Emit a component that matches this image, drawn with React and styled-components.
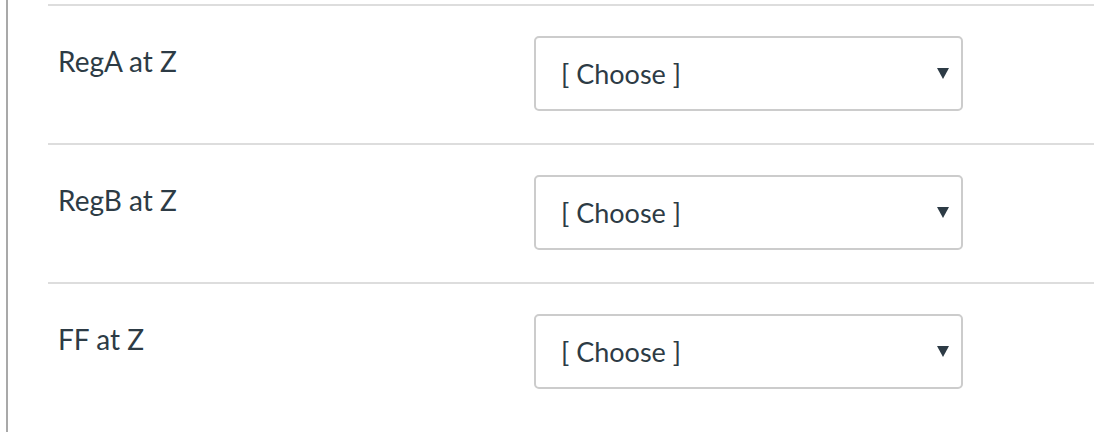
import React from "react";
import styled, { createGlobalStyle } from "styled-components";

const GlobalStyle = createGlobalStyle`
    html, body {
        margin: 0;
        padding: 0;
        background: #fff;
    }
    body {
        font-family: Lato, "Noto Sans", "Liberation Sans", sans-serif;
        color: #2d3b45;
    }
`

// 왼쪽 회색 세로줄 + 질문 목록
const QuestionArea = styled.div`
    box-sizing: border-box;
    min-height: 100vh;
    margin-left: 6px;
    border-left: 2px solid #a9a9a9;
    padding-left: 40px;
    padding-top: 4px;
`

const MatchRow = styled.div`
    box-sizing: border-box;
    height: 139px;
    display: flex;
    align-items: flex-start;
    border-top: 2px solid #dddddd;
`

const MatchLabel = styled.div`
    box-sizing: border-box;
    width: 486px;
    padding-left: 10px;
    padding-top: 37px;
    font-size: 28px;
    line-height: 36px;
`

const SelectWrap = styled.div`
    position: relative;
    margin-top: 30px;
    width: 429px;

    &::after {
        content: "";
        position: absolute;
        right: 14px;
        top: 32px;
        width: 0;
        height: 0;
        border-left: 6px solid transparent;
        border-right: 6px solid transparent;
        border-top: 11px solid #2d3b45;
        pointer-events: none;
    }
`

const ChooseSelect = styled.select`
    box-sizing: border-box;
    width: 100%;
    height: 75px;
    appearance: none;
    -webkit-appearance: none;
    background: #fff;
    border: 2px solid #cccccc;
    border-radius: 5px;
    padding: 0 40px 0 25px;
    font-family: Lato, "Noto Sans", "Liberation Sans", sans-serif;
    font-size: 27px;
    color: #2d3b45;
    outline: none;
`

const answers = ["RegA at Z", "RegB at Z", "FF at Z"];

const App = () => {
    return (
        <>
            <GlobalStyle />
            <QuestionArea>
                {answers.map((text) => (
                    <MatchRow key={text}>
                        <MatchLabel>{text}</MatchLabel>
                        <SelectWrap>
                            <ChooseSelect defaultValue="">
                                <option value="">[ Choose ]</option>
                            </ChooseSelect>
                        </SelectWrap>
                    </MatchRow>
                ))}
            </QuestionArea>
        </>
    )
}

export default App;
